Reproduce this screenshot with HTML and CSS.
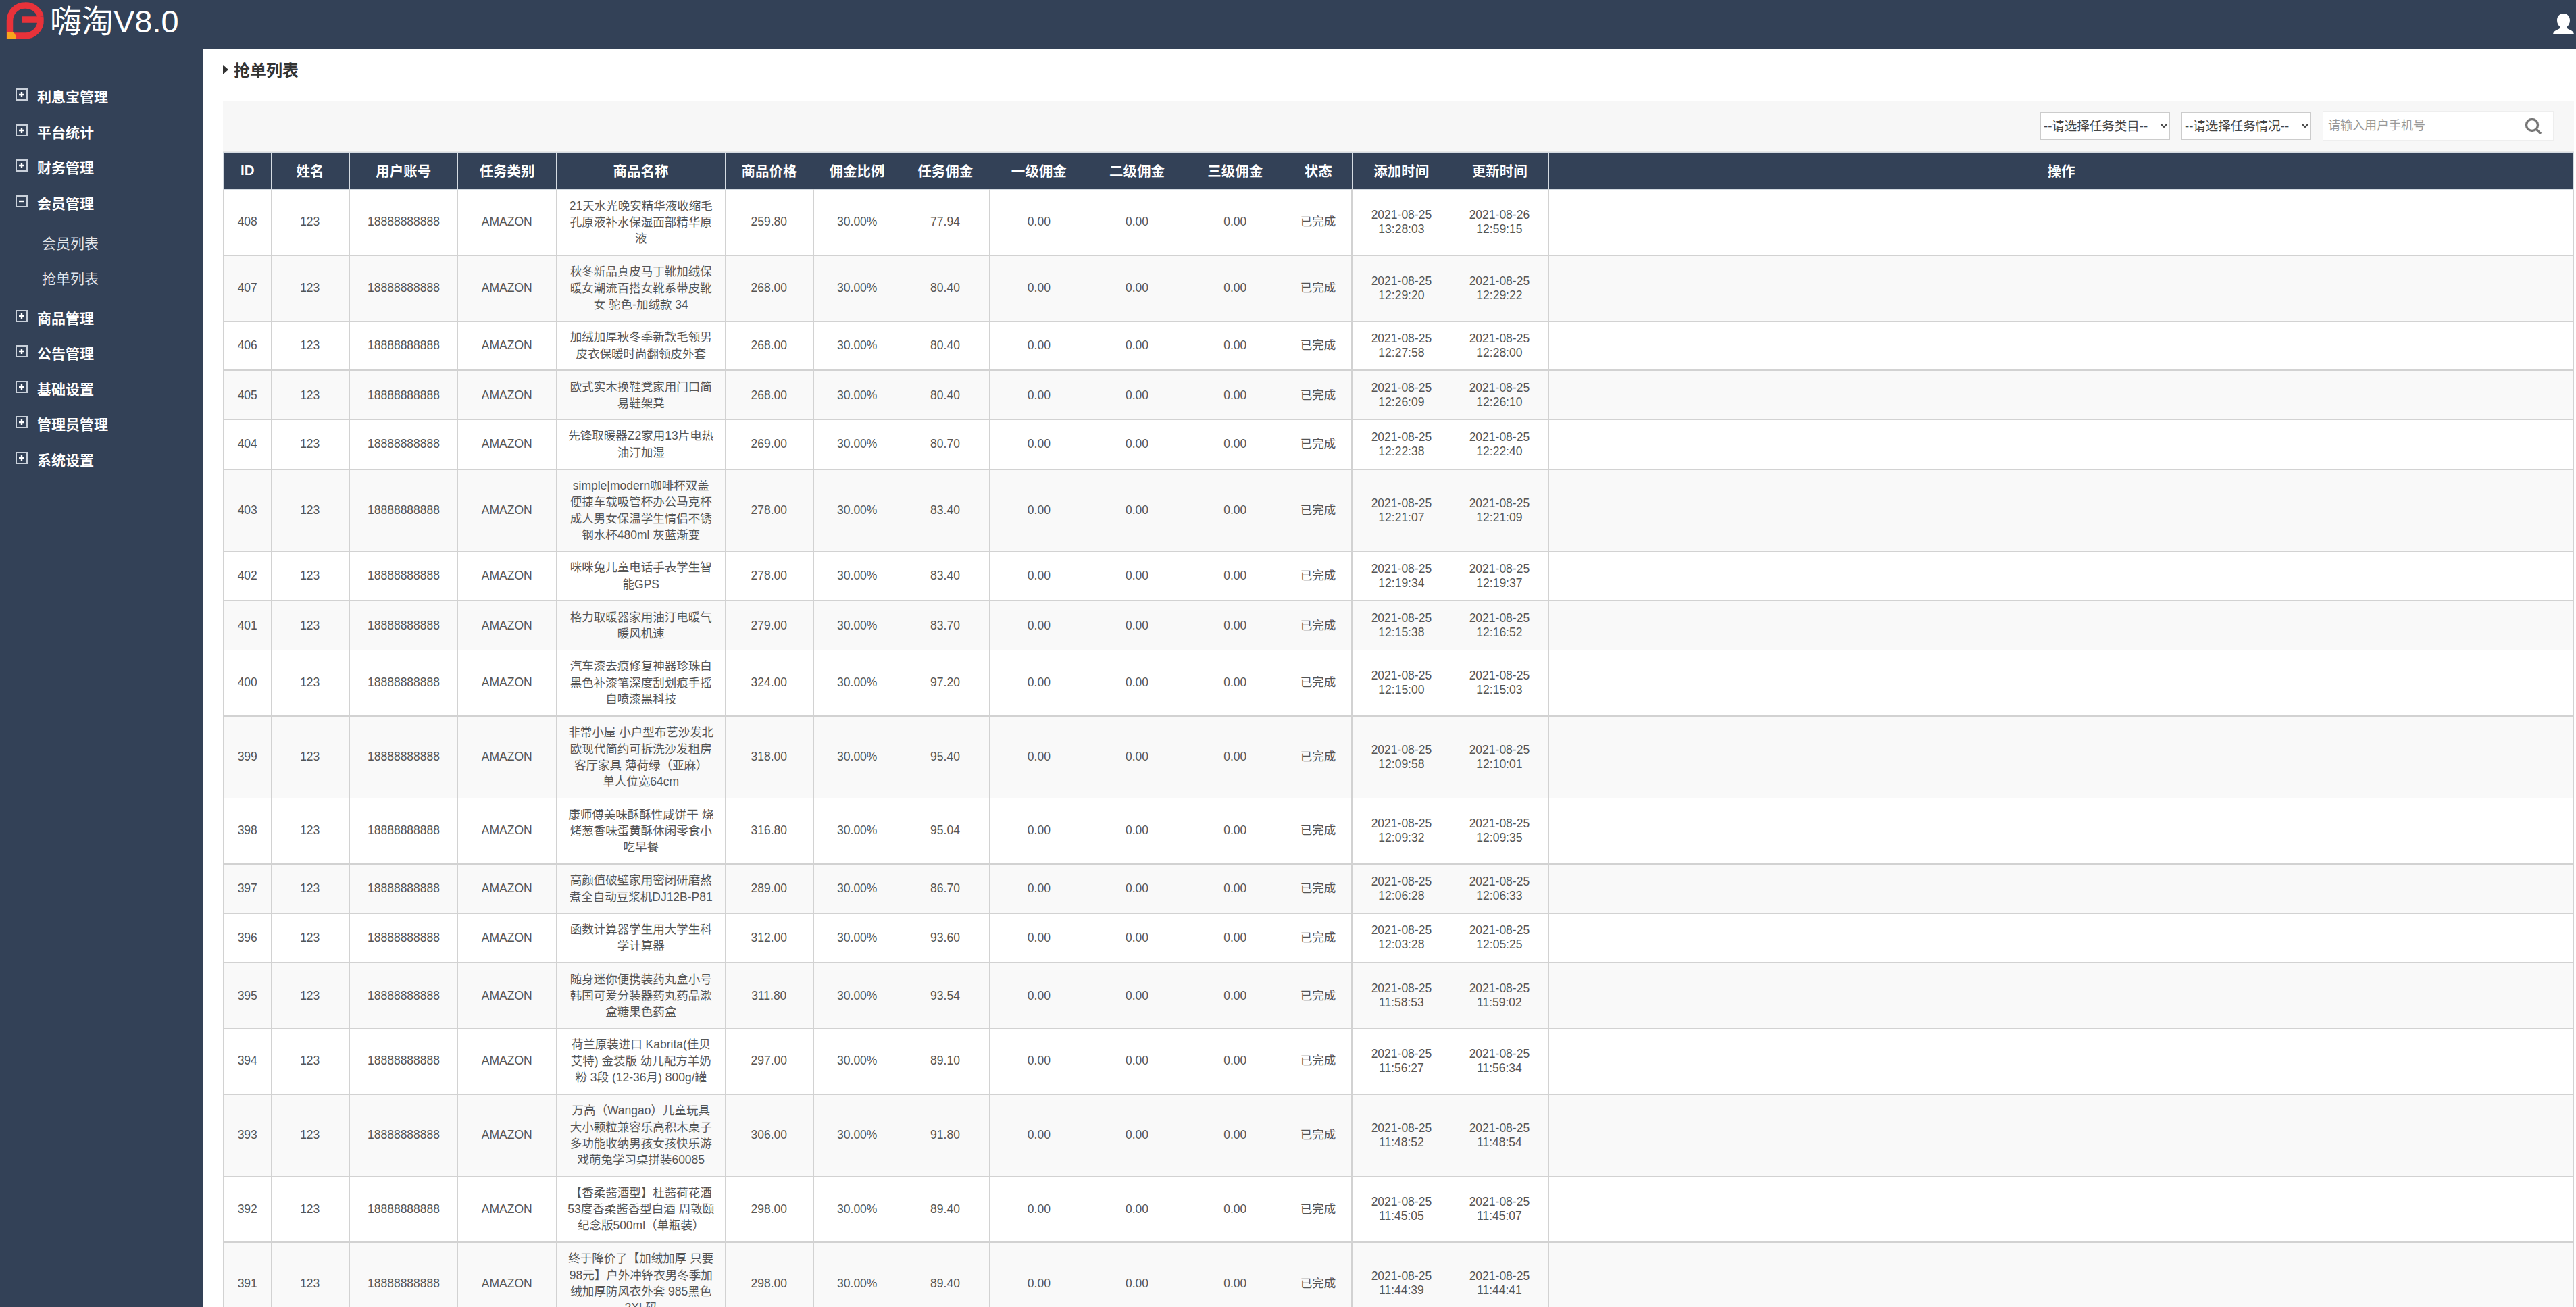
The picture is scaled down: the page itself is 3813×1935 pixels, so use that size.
FILE: index.html
```html
<!doctype html>
<html lang="zh-CN">

<head>
<meta charset="utf-8">
<title>抢单列表</title>

<link rel="stylesheet" href="styles.css">

</head>

<body>

<svg class="defs" width="0" height="0">
  <symbol id="box-plus" viewBox="0 0 18 18">
    <rect x="1" y="1" width="16" height="16" fill="none" stroke="#c9d0da" stroke-width="2"/>
    <path d="M9 5v8M5 9h8" stroke="#fff" stroke-width="2.4"/>
  </symbol>
  <symbol id="box-minus" viewBox="0 0 18 18">
    <rect x="1" y="1" width="16" height="16" fill="none" stroke="#c9d0da" stroke-width="2"/>
    <path d="M5 9h8" stroke="#fff" stroke-width="2.4"/>
  </symbol>
</svg>

<header class="topbar">
  <div class="brand">
    <svg class="logo" width="70" height="60" viewBox="0 0 70 60">
      <path d="M60 24A22.7 22.7 0 0 0 37 8 22.5 22.5 0 0 0 14.5 30.5V53H37A22.5 22.5 0 0 0 60 29H33" fill="none" stroke="#e8323a" stroke-width="9.5"/>
      <path d="M10 58V47.500H17Q24 48 24 58Z" fill="#f7a51c"/>
    </svg>
    <span class="brand-name">嗨淘V8.0</span>
  </div>
  <svg class="user-icon" width="31" height="31" viewBox="0 0 31 31">
    <path d="M15.500 0C9.500 0 6 4.500 6 10c0 4 1.700 7.500 4.300 9.800.3 1.800-.6 2.900-2.800 3.800C4 25 .8 26.500 0 30.500h31c-.8-4-4-5.500-7.500-6.900-2.200-.9-3.100-2-2.800-3.800C23.300 17.500 25 14 25 10 25 4.500 21.500 0 15.500 0z" fill="#fff"/>
  </svg>
</header>

<div class="layout">

  <nav class="sidebar">
    <a class="menu-group"><svg class="menu-icon"><use href="#box-plus"/></svg>利息宝管理</a>
    <a class="menu-group"><svg class="menu-icon"><use href="#box-plus"/></svg>平台统计</a>
    <a class="menu-group"><svg class="menu-icon"><use href="#box-plus"/></svg>财务管理</a>
    <a class="menu-group"><svg class="menu-icon"><use href="#box-minus"/></svg>会员管理</a>
    <div class="submenu">
      <a class="submenu-item">会员列表</a>
      <a class="submenu-item">抢单列表</a>
    </div>
    <a class="menu-group"><svg class="menu-icon"><use href="#box-plus"/></svg>商品管理</a>
    <a class="menu-group"><svg class="menu-icon"><use href="#box-plus"/></svg>公告管理</a>
    <a class="menu-group"><svg class="menu-icon"><use href="#box-plus"/></svg>基础设置</a>
    <a class="menu-group"><svg class="menu-icon"><use href="#box-plus"/></svg>管理员管理</a>
    <a class="menu-group"><svg class="menu-icon"><use href="#box-plus"/></svg>系统设置</a>
  </nav>

  <main class="content">
    <h1 class="page-title">抢单列表</h1>

    <div class="panel">
      <div class="toolbar">
        <select class="filter"><option>--请选择任务类目--</option></select>
        <select class="filter"><option>--请选择任务情况--</option></select>
        <div class="search">
          <input class="search-input" type="text" placeholder="请输入用户手机号">
          <svg class="search-icon" width="26" height="26" viewBox="0 0 26 26">
            <circle cx="11" cy="11" r="8.500" fill="none" stroke="#777" stroke-width="3.400"/>
            <path d="M17 17l7 7" stroke="#777" stroke-width="3.400"/>
          </svg>
        </div>
      </div>

      <table class="orders">
        <colgroup>
          <col class="w-id"><col class="w-name"><col class="w-phone"><col class="w-type"><col class="w-goods">
          <col class="w-money"><col class="w-money"><col class="w-task"><col class="w-level"><col class="w-level">
          <col class="w-level"><col class="w-state"><col class="w-time"><col class="w-time"><col>
        </colgroup>
        <thead>
          <tr>
            <th>ID</th><th>姓名</th><th>用户账号</th><th>任务类别</th><th>商品名称</th><th>商品价格</th><th>佣金比例</th><th>任务佣金</th><th>一级佣金</th><th>二级佣金</th><th>三级佣金</th><th>状态</th><th>添加时间</th><th>更新时间</th><th>操作</th>
          </tr>
        </thead>
        <tbody>
          <tr><td>408</td><td>123</td><td>18888888888</td><td>AMAZON</td><td class="goods">21天水光晚安精华液收缩毛<br>孔原液补水保湿面部精华原<br>液</td><td>259.80</td><td>30.00%</td><td>77.94</td><td>0.00</td><td>0.00</td><td>0.00</td><td>已完成</td><td>2021-08-25 13:28:03</td><td>2021-08-26 12:59:15</td><td></td></tr>
          <tr><td>407</td><td>123</td><td>18888888888</td><td>AMAZON</td><td class="goods">秋冬新品真皮马丁靴加绒保<br>暖女潮流百搭女靴系带皮靴<br>女 驼色-加绒款 34</td><td>268.00</td><td>30.00%</td><td>80.40</td><td>0.00</td><td>0.00</td><td>0.00</td><td>已完成</td><td>2021-08-25 12:29:20</td><td>2021-08-25 12:29:22</td><td></td></tr>
          <tr><td>406</td><td>123</td><td>18888888888</td><td>AMAZON</td><td class="goods">加绒加厚秋冬季新款毛领男<br>皮衣保暖时尚翻领皮外套</td><td>268.00</td><td>30.00%</td><td>80.40</td><td>0.00</td><td>0.00</td><td>0.00</td><td>已完成</td><td>2021-08-25 12:27:58</td><td>2021-08-25 12:28:00</td><td></td></tr>
          <tr><td>405</td><td>123</td><td>18888888888</td><td>AMAZON</td><td class="goods">欧式实木换鞋凳家用门口简<br>易鞋架凳</td><td>268.00</td><td>30.00%</td><td>80.40</td><td>0.00</td><td>0.00</td><td>0.00</td><td>已完成</td><td>2021-08-25 12:26:09</td><td>2021-08-25 12:26:10</td><td></td></tr>
          <tr><td>404</td><td>123</td><td>18888888888</td><td>AMAZON</td><td class="goods">先锋取暖器Z2家用13片电热<br>油汀加湿</td><td>269.00</td><td>30.00%</td><td>80.70</td><td>0.00</td><td>0.00</td><td>0.00</td><td>已完成</td><td>2021-08-25 12:22:38</td><td>2021-08-25 12:22:40</td><td></td></tr>
          <tr><td>403</td><td>123</td><td>18888888888</td><td>AMAZON</td><td class="goods">simple|modern咖啡杯双盖<br>便捷车载吸管杯办公马克杯<br>成人男女保温学生情侣不锈<br>钢水杯480ml 灰蓝渐变</td><td>278.00</td><td>30.00%</td><td>83.40</td><td>0.00</td><td>0.00</td><td>0.00</td><td>已完成</td><td>2021-08-25 12:21:07</td><td>2021-08-25 12:21:09</td><td></td></tr>
          <tr><td>402</td><td>123</td><td>18888888888</td><td>AMAZON</td><td class="goods">咪咪兔儿童电话手表学生智<br>能GPS</td><td>278.00</td><td>30.00%</td><td>83.40</td><td>0.00</td><td>0.00</td><td>0.00</td><td>已完成</td><td>2021-08-25 12:19:34</td><td>2021-08-25 12:19:37</td><td></td></tr>
          <tr><td>401</td><td>123</td><td>18888888888</td><td>AMAZON</td><td class="goods">格力取暖器家用油汀电暖气<br>暖风机速</td><td>279.00</td><td>30.00%</td><td>83.70</td><td>0.00</td><td>0.00</td><td>0.00</td><td>已完成</td><td>2021-08-25 12:15:38</td><td>2021-08-25 12:16:52</td><td></td></tr>
          <tr><td>400</td><td>123</td><td>18888888888</td><td>AMAZON</td><td class="goods">汽车漆去痕修复神器珍珠白<br>黑色补漆笔深度刮划痕手摇<br>自喷漆黑科技</td><td>324.00</td><td>30.00%</td><td>97.20</td><td>0.00</td><td>0.00</td><td>0.00</td><td>已完成</td><td>2021-08-25 12:15:00</td><td>2021-08-25 12:15:03</td><td></td></tr>
          <tr><td>399</td><td>123</td><td>18888888888</td><td>AMAZON</td><td class="goods">非常小屋 小户型布艺沙发北<br>欧现代简约可拆洗沙发租房<br>客厅家具 薄荷绿（亚麻）<br>单人位宽64cm</td><td>318.00</td><td>30.00%</td><td>95.40</td><td>0.00</td><td>0.00</td><td>0.00</td><td>已完成</td><td>2021-08-25 12:09:58</td><td>2021-08-25 12:10:01</td><td></td></tr>
          <tr><td>398</td><td>123</td><td>18888888888</td><td>AMAZON</td><td class="goods">康师傅美味酥酥性咸饼干 烧<br>烤葱香味蛋黄酥休闲零食小<br>吃早餐</td><td>316.80</td><td>30.00%</td><td>95.04</td><td>0.00</td><td>0.00</td><td>0.00</td><td>已完成</td><td>2021-08-25 12:09:32</td><td>2021-08-25 12:09:35</td><td></td></tr>
          <tr><td>397</td><td>123</td><td>18888888888</td><td>AMAZON</td><td class="goods">高颜值破壁家用密闭研磨熬<br>煮全自动豆浆机DJ12B-P81</td><td>289.00</td><td>30.00%</td><td>86.70</td><td>0.00</td><td>0.00</td><td>0.00</td><td>已完成</td><td>2021-08-25 12:06:28</td><td>2021-08-25 12:06:33</td><td></td></tr>
          <tr><td>396</td><td>123</td><td>18888888888</td><td>AMAZON</td><td class="goods">函数计算器学生用大学生科<br>学计算器</td><td>312.00</td><td>30.00%</td><td>93.60</td><td>0.00</td><td>0.00</td><td>0.00</td><td>已完成</td><td>2021-08-25 12:03:28</td><td>2021-08-25 12:05:25</td><td></td></tr>
          <tr><td>395</td><td>123</td><td>18888888888</td><td>AMAZON</td><td class="goods">随身迷你便携装药丸盒小号<br>韩国可爱分装器药丸药品漱<br>盒糖果色药盒</td><td>311.80</td><td>30.00%</td><td>93.54</td><td>0.00</td><td>0.00</td><td>0.00</td><td>已完成</td><td>2021-08-25 11:58:53</td><td>2021-08-25 11:59:02</td><td></td></tr>
          <tr><td>394</td><td>123</td><td>18888888888</td><td>AMAZON</td><td class="goods">荷兰原装进口 Kabrita(佳贝<br>艾特) 金装版 幼儿配方羊奶<br>粉 3段 (12-36月) 800g/罐</td><td>297.00</td><td>30.00%</td><td>89.10</td><td>0.00</td><td>0.00</td><td>0.00</td><td>已完成</td><td>2021-08-25 11:56:27</td><td>2021-08-25 11:56:34</td><td></td></tr>
          <tr><td>393</td><td>123</td><td>18888888888</td><td>AMAZON</td><td class="goods">万高（Wangao）儿童玩具<br>大小颗粒兼容乐高积木桌子<br>多功能收纳男孩女孩快乐游<br>戏萌兔学习桌拼装60085</td><td>306.00</td><td>30.00%</td><td>91.80</td><td>0.00</td><td>0.00</td><td>0.00</td><td>已完成</td><td>2021-08-25 11:48:52</td><td>2021-08-25 11:48:54</td><td></td></tr>
          <tr><td>392</td><td>123</td><td>18888888888</td><td>AMAZON</td><td class="goods">【香柔酱酒型】杜酱荷花酒<br>53度香柔酱香型白酒 周敦颐<br>纪念版500ml（单瓶装）</td><td>298.00</td><td>30.00%</td><td>89.40</td><td>0.00</td><td>0.00</td><td>0.00</td><td>已完成</td><td>2021-08-25 11:45:05</td><td>2021-08-25 11:45:07</td><td></td></tr>
          <tr><td>391</td><td>123</td><td>18888888888</td><td>AMAZON</td><td class="goods">终于降价了【加绒加厚 只要<br>98元】户外冲锋衣男冬季加<br>绒加厚防风衣外套 985黑色<br>2XL码</td><td>298.00</td><td>30.00%</td><td>89.40</td><td>0.00</td><td>0.00</td><td>0.00</td><td>已完成</td><td>2021-08-25 11:44:39</td><td>2021-08-25 11:44:41</td><td></td></tr>
        </tbody>
      </table>
    </div>
  </main>

</div>

</body>

</html>
```

FILE: styles.css
```css
html,
body {
  height: 100%;
  margin: 0;
  overflow: hidden;
}

body {
  background-color: #fff;
  color: #555;
  font-family: "Liberation Sans", "Noto Sans CJK SC", sans-serif;
}

.defs {
  display: block;
  height: 0;
}

/* top bar */

.topbar {
  align-items: center;
  background-color: #334157;
  display: flex;
  height: 72px;
  justify-content: space-between;
  padding-right: 3px;
}

.brand {
  align-items: flex-start;
  display: flex;
  height: 100%;
}

.logo {
  flex: none;
}

.brand-name {
  color: #fff;
  font-size: 47px;
  font-weight: 400;
  line-height: 64px;
  margin-left: 4px;
}

.user-icon {
  margin-top: -2px;
}

.layout {
  display: flex;
  height: calc(100% - 72px);
}

/* sidebar */

.sidebar {
  background-color: #334157;
  box-sizing: border-box;
  flex: none;
  padding-top: 44px;
  width: 300px;
}

.menu-group {
  align-items: center;
  color: #fff;
  display: flex;
  font-size: 21px;
  font-weight: 700;
  height: 52.600px;
  padding-left: 23px;
}

.menu-icon {
  flex: none;
  height: 18px;
  margin-right: 14px;
  margin-top: -4px;
  width: 18px;
}

.submenu {
  padding: 7px 0 6px;
}

.submenu-item {
  align-items: center;
  color: #e3e6ea;
  display: flex;
  font-size: 21px;
  height: 52px;
  padding-left: 62px;
}

/* content */

.content {
  flex: 1;
  min-width: 0;
}

.page-title {
  align-items: center;
  border-bottom: 1px solid #d9d9d9;
  box-sizing: border-box;
  color: #333;
  display: flex;
  font-size: 24px;
  font-weight: 700;
  height: 63px;
  margin: 0;
  padding-bottom: 1px;
  padding-left: 30px;
}

.page-title::before {
  border-bottom: 7px solid transparent;
  border-left: 8px solid #333;
  border-top: 7px solid transparent;
  content: "";
  margin-right: 8px;
}

.panel {
  padding: 15px 3px 0 30px;
}

.toolbar {
  align-items: center;
  background-color: #f7f7f7;
  border-bottom: 2px solid #e6e6e6;
  display: flex;
  gap: 17px;
  height: 73px;
  justify-content: flex-end;
  padding-right: 30px;
}

.filter {
  background-color: #fff;
  border: 1px solid #ccc;
  color: #444;
  font-family: inherit;
  font-size: 18.500px;
  height: 41px;
  width: 192px;
}

.search {
  align-items: center;
  background-color: #fff;
  border: 1px solid #eee;
  box-sizing: border-box;
  display: flex;
  height: 44px;
  justify-content: space-between;
  padding: 0 16px 0 7px;
  width: 342px;
}

.search-input {
  background: none;
  border: 0;
  color: #444;
  flex: 1;
  font-family: inherit;
  font-size: 18px;
  min-width: 0;
  outline: none;
  padding: 0;
}

.search-input::placeholder {
  color: #999;
}

/* table */

.orders {
  border-collapse: collapse;
  table-layout: fixed;
  width: 3480px;
}

.w-id { width: 70px; }
.w-name { width: 116px; }
.w-phone { width: 160.500px; }
.w-type { width: 146px; }
.w-goods { width: 250px; }
.w-money { width: 130px; }
.w-task { width: 131.500px; }
.w-level { width: 145.300px; }
.w-state { width: 100.500px; }
.w-time { width: 145.500px; }

.orders th {
  background-color: #334157;
  border: 1px solid #d5dbe2;
  color: #fff;
  font-size: 20.500px;
  font-weight: 700;
  height: 51px;
  padding: 0 0 3px;
  text-align: center;
}

.orders td {
  border: 1px solid #d2d2d2;
  font-size: 17.500px;
  line-height: 21px;
  padding: 0 8px;
  text-align: center;
}

.orders td.goods {
  line-height: 24.300px;
  padding: 11.500px 8px;
}

.orders tbody tr:nth-child(even) td {
  background-color: #f9f9f9;
}

.orders tbody tr:nth-child(odd) td {
  border-bottom-width: 2px;
}

.orders td:first-child,
.orders th:first-child,
.orders td:nth-child(3),
.orders td:nth-child(5),
.orders td:nth-child(7),
.orders td:nth-child(9),
.orders td:nth-child(13),
.orders td:nth-child(15) {
  border-left-width: 2px;
}
```
